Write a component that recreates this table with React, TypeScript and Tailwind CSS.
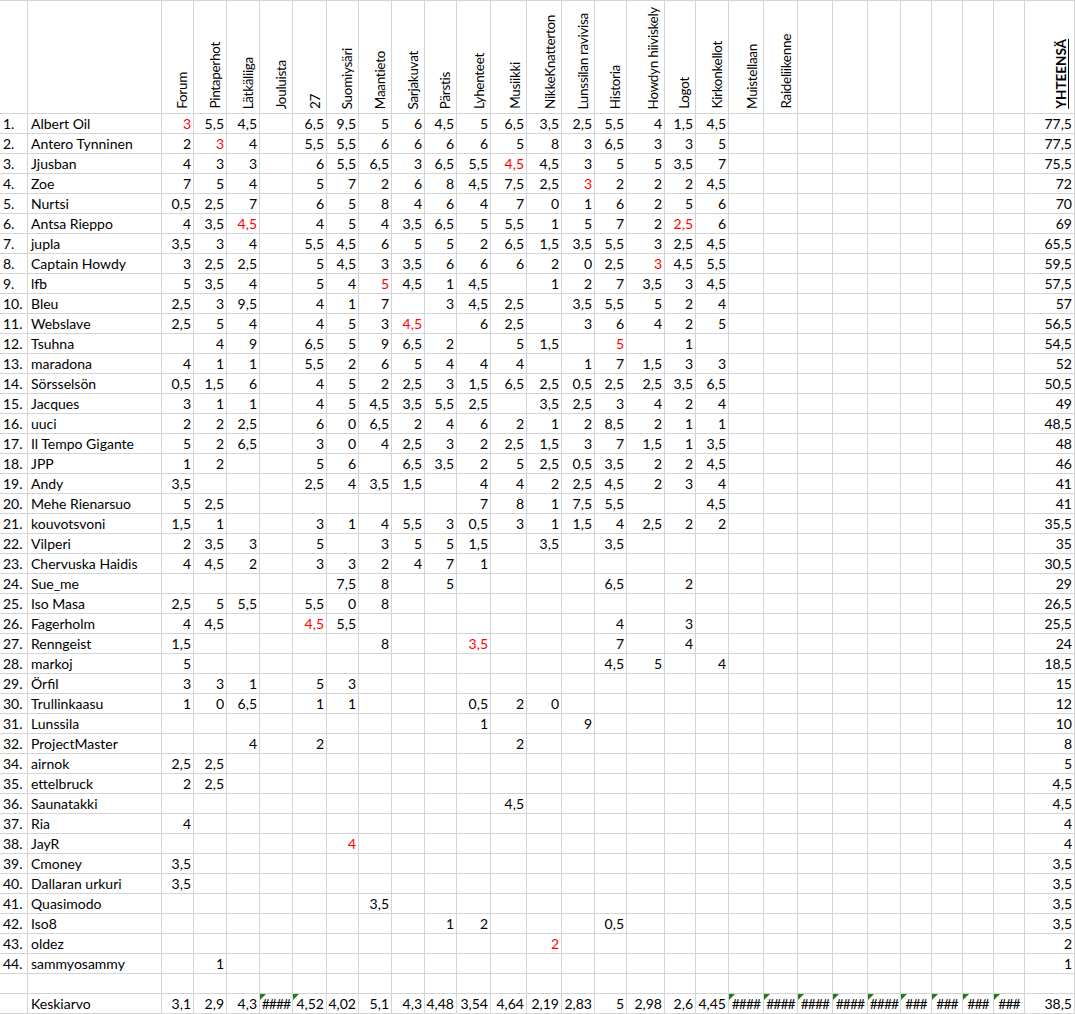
const columns = [
  'Forum',
  'Pintaperhot',
  'Lätkäliiga',
  'Jouluista',
  '27',
  'Suomiysäri',
  'Maantieto',
  'Sarjakuvat',
  'Pärstis',
  'Lyhenteet',
  'Musiikki',
  'NikkeKnatterton',
  'Lunssilan ravivisa',
  'Historia',
  'Howdyn hiiviskely',
  'Logot',
  'Kirkonkellot',
  'Muistellaan',
  'Raideliikenne',
  '',
  '',
  '',
  '',
  '',
  '',
  '',
];

// '-' = empty cell, trailing '*' = red value
const rows: [string, string, string, string][] = [
  ['1.', 'Albert Oil', '3* 5,5 4,5 - 6,5 9,5 5 6 4,5 5 6,5 3,5 2,5 5,5 4 1,5 4,5', '77,5'],
  ['2.', 'Antero Tynninen', '2 3* 4 - 5,5 5,5 6 6 6 6 5 8 3 6,5 3 3 5', '77,5'],
  ['3.', 'Jjusban', '4 3 3 - 6 5,5 6,5 3 6,5 5,5 4,5* 4,5 3 5 5 3,5 7', '75,5'],
  ['4.', 'Zoe', '7 5 4 - 5 7 2 6 8 4,5 7,5 2,5 3* 2 2 2 4,5', '72'],
  ['5.', 'Nurtsi', '0,5 2,5 7 - 6 5 8 4 6 4 7 0 1 6 2 5 6', '70'],
  ['6.', 'Antsa Rieppo', '4 3,5 4,5* - 4 5 4 3,5 6,5 5 5,5 1 5 7 2 2,5* 6', '69'],
  ['7.', 'jupla', '3,5 3 4 - 5,5 4,5 6 5 5 2 6,5 1,5 3,5 5,5 3 2,5 4,5', '65,5'],
  ['8.', 'Captain Howdy', '3 2,5 2,5 - 5 4,5 3 3,5 6 6 6 2 0 2,5 3* 4,5 5,5', '59,5'],
  ['9.', 'lfb', '5 3,5 4 - 5 4 5* 4,5 1 4,5 - 1 2 7 3,5 3 4,5', '57,5'],
  ['10.', 'Bleu', '2,5 3 9,5 - 4 1 7 - 3 4,5 2,5 - 3,5 5,5 5 2 4', '57'],
  ['11.', 'Webslave', '2,5 5 4 - 4 5 3 4,5* - 6 2,5 - 3 6 4 2 5', '56,5'],
  ['12.', 'Tsuhna', '- 4 9 - 6,5 5 9 6,5 2 - 5 1,5 - 5* - 1 -', '54,5'],
  ['13.', 'maradona', '4 1 1 - 5,5 2 6 5 4 4 4 - 1 7 1,5 3 3', '52'],
  ['14.', 'Sörsselsön', '0,5 1,5 6 - 4 5 2 2,5 3 1,5 6,5 2,5 0,5 2,5 2,5 3,5 6,5', '50,5'],
  ['15.', 'Jacques', '3 1 1 - 4 5 4,5 3,5 5,5 2,5 - 3,5 2,5 3 4 2 4', '49'],
  ['16.', 'uuci', '2 2 2,5 - 6 0 6,5 2 4 6 2 1 2 8,5 2 1 1', '48,5'],
  ['17.', 'Il Tempo Gigante', '5 2 6,5 - 3 0 4 2,5 3 2 2,5 1,5 3 7 1,5 1 3,5', '48'],
  ['18.', 'JPP', '1 2 - - 5 6 - 6,5 3,5 2 5 2,5 0,5 3,5 2 2 4,5', '46'],
  ['19.', 'Andy', '3,5 - - - 2,5 4 3,5 1,5 - 4 4 2 2,5 4,5 2 3 4', '41'],
  ['20.', 'Mehe Rienarsuo', '5 2,5 - - - - - - - 7 8 1 7,5 5,5 - - 4,5', '41'],
  ['21.', 'kouvotsvoni', '1,5 1 - - 3 1 4 5,5 3 0,5 3 1 1,5 4 2,5 2 2', '35,5'],
  ['22.', 'Vilperi', '2 3,5 3 - 5 - 3 5 5 1,5 - 3,5 - 3,5 - - -', '35'],
  ['23.', 'Chervuska Haidis', '4 4,5 2 - 3 3 2 4 7 1 - - - - - - -', '30,5'],
  ['24.', 'Sue_me', '- - - - - 7,5 8 - 5 - - - - 6,5 - 2 -', '29'],
  ['25.', 'Iso Masa', '2,5 5 5,5 - 5,5 0 8 - - - - - - - - - -', '26,5'],
  ['26.', 'Fagerholm', '4 4,5 - - 4,5* 5,5 - - - - - - - 4 - 3 -', '25,5'],
  ['27.', 'Renngeist', '1,5 - - - - - 8 - - 3,5* - - - 7 - 4 -', '24'],
  ['28.', 'markoj', '5 - - - - - - - - - - - - 4,5 5 - 4', '18,5'],
  ['29.', 'Örfil', '3 3 1 - 5 3 - - - - - - - - - - -', '15'],
  ['30.', 'Trullinkaasu', '1 0 6,5 - 1 1 - - - 0,5 2 0 - - - - -', '12'],
  ['31.', 'Lunssila', '- - - - - - - - - 1 - - 9 - - - -', '10'],
  ['32.', 'ProjectMaster', '- - 4 - 2 - - - - - 2 - - - - - -', '8'],
  ['34.', 'airnok', '2,5 2,5 - - - - - - - - - - - - - - -', '5'],
  ['35.', 'ettelbruck', '2 2,5 - - - - - - - - - - - - - - -', '4,5'],
  ['36.', 'Saunatakki', '- - - - - - - - - - 4,5 - - - - - -', '4,5'],
  ['37.', 'Ria', '4 - - - - - - - - - - - - - - - -', '4'],
  ['38.', 'JayR', '- - - - - 4* - - - - - - - - - - -', '4'],
  ['39.', 'Cmoney', '3,5 - - - - - - - - - - - - - - - -', '3,5'],
  ['40.', 'Dallaran urkuri', '3,5 - - - - - - - - - - - - - - - -', '3,5'],
  ['41.', 'Quasimodo', '- - - - - - 3,5 - - - - - - - - - -', '3,5'],
  ['42.', 'Iso8', '- - - - - - - - 1 2 - - - 0,5 - - -', '3,5'],
  ['43.', 'oldez', '- - - - - - - - - - - 2* - - - - -', '2'],
  ['44.', 'sammyosammy', '- 1 - - - - - - - - - - - - - - -', '1'],
];

// Keskiarvo row, '#' prefix marks a cell with the green error flag
const averages = [
  '3,1', '2,9', '4,3', '#####', '#4,52', '4,02', '5,1', '4,3', '4,48', '3,54', '4,64', '2,19', '2,83', '5', '2,98', '2,6', '4,45',
  '#####', '#####', '#####', '#####', '#####', '####', '####', '####', '####',
];

const cell = 'h-5 border-r border-b border-[#d4d4d4] leading-[19px] whitespace-nowrap overflow-hidden';

function NumberCell({ value }: { value: string }) {
  if (value === '-' || value === '') return <div className={cell} />;
  const red = value.endsWith('*');
  const text = red ? value.slice(0, -1) : value;
  return <div className={`${cell} pr-[2px] text-right ${red ? 'text-[#ff0000]' : ''}`}>{text}</div>;
}

function AverageCell({ value }: { value: string }) {
  const flagged = value.startsWith('#');
  const text = flagged ? value.slice(1) : value;
  const hashes = text.startsWith('#');
  return (
    <div className={`${cell} relative ${hashes ? 'text-center tracking-[-1px]' : 'pr-[2px] text-right'}`}>
      {flagged && (
        <span className="absolute top-0 left-0 h-0 w-0 border-t-[6px] border-r-[6px] border-t-[#1e7b1e] border-r-transparent" />
      )}
      {text}
    </div>
  );
}

export default function App() {
  return (
    <div className="w-[1075px] bg-white text-[14px] text-black [font-family:Lato,'Liberation_Sans',sans-serif]">
      <div className="grid grid-cols-[28px_134px_32px_33px_33px_33px_34px_32px_33px_33px_32px_34px_36px_35px_33px_32px_38px_31px_33px_35px_34px_35px_35px_33px_31px_31px_31px_31px_50px]">
        {/* Header */}
        <div className="h-[114px] border-t border-r border-b border-[#d4d4d4]" />
        <div className="h-[114px] border-t border-r border-b border-[#d4d4d4]" />
        {columns.map((name, i) => (
          <div
            key={i}
            className="flex h-[114px] items-end justify-end overflow-hidden border-t border-r border-b border-[#d4d4d4] pr-[2px] pb-[4px]"
          >
            <span className="rotate-180 whitespace-nowrap text-[13.5px] tracking-[-0.3px] leading-[18px] [writing-mode:vertical-rl]">
              {name}
            </span>
          </div>
        ))}
        <div className="flex h-[114px] items-end justify-end border-t border-r border-b border-[#d4d4d4] pr-[4px] pb-[4px]">
          <span className="rotate-180 whitespace-nowrap text-[13.5px] font-bold underline leading-[18px] [writing-mode:vertical-rl]">
            YHTEENSÄ
          </span>
        </div>

        {/* Players */}
        {rows.map(([rank, name, values, total]) => {
          const scores = values.split(' ');
          return (
            <div key={rank} className="contents">
              <div className={`${cell} pl-[3px]`}>{rank}</div>
              <div className={`${cell} pl-[3px]`}>{name}</div>
              {scores.map((v, i) => (
                <NumberCell key={i} value={v} />
              ))}
              {Array.from({ length: 9 }).map((_, i) => (
                <div key={`e${i}`} className={cell} />
              ))}
              <NumberCell value={total} />
            </div>
          );
        })}

        {/* Empty row */}
        {Array.from({ length: 29 }).map((_, i) => (
          <div key={`blank${i}`} className={cell} />
        ))}

        {/* Averages */}
        <div className={cell} />
        <div className={`${cell} pl-[3px]`}>Keskiarvo</div>
        {averages.map((v, i) => (
          <AverageCell key={i} value={v} />
        ))}
        <NumberCell value="38,5" />
      </div>
    </div>
  );
}
